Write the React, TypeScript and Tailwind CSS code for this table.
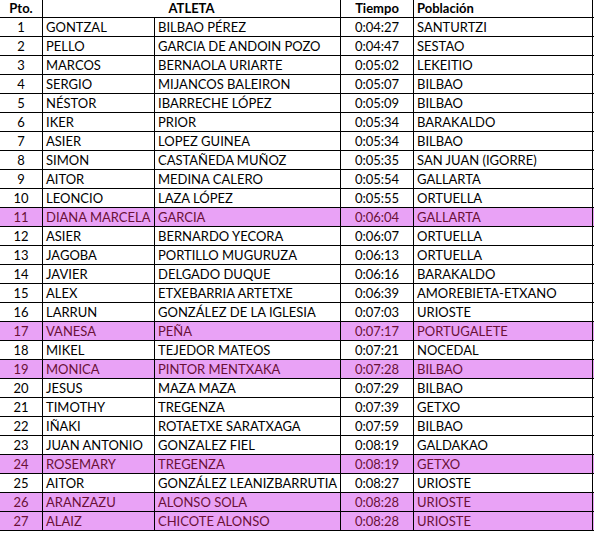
import React from "react";

type Row = [number, string, string, string, string, boolean];

const rows: Row[] = [
  [1, "GONTZAL", "BILBAO PÉREZ", "0:04:27", "SANTURTZI", false],
  [2, "PELLO", "GARCIA DE ANDOIN POZO", "0:04:47", "SESTAO", false],
  [3, "MARCOS", "BERNAOLA URIARTE", "0:05:02", "LEKEITIO", false],
  [4, "SERGIO", "MIJANCOS BALEIRON", "0:05:07", "BILBAO", false],
  [5, "NÉSTOR", "IBARRECHE LÓPEZ", "0:05:09", "BILBAO", false],
  [6, "IKER", "PRIOR", "0:05:34", "BARAKALDO", false],
  [7, "ASIER", "LOPEZ GUINEA", "0:05:34", "BILBAO", false],
  [8, "SIMON", "CASTAÑEDA MUÑOZ", "0:05:35", "SAN JUAN (IGORRE)", false],
  [9, "AITOR", "MEDINA CALERO", "0:05:54", "GALLARTA", false],
  [10, "LEONCIO", "LAZA LÓPEZ", "0:05:55", "ORTUELLA", false],
  [11, "DIANA MARCELA", "GARCIA", "0:06:04", "GALLARTA", true],
  [12, "ASIER", "BERNARDO YECORA", "0:06:07", "ORTUELLA", false],
  [13, "JAGOBA", "PORTILLO MUGURUZA", "0:06:13", "ORTUELLA", false],
  [14, "JAVIER", "DELGADO DUQUE", "0:06:16", "BARAKALDO", false],
  [15, "ALEX", "ETXEBARRIA ARTETXE", "0:06:39", "AMOREBIETA-ETXANO", false],
  [16, "LARRUN", "GONZÁLEZ DE LA IGLESIA", "0:07:03", "URIOSTE", false],
  [17, "VANESA", "PEÑA", "0:07:17", "PORTUGALETE", true],
  [18, "MIKEL", "TEJEDOR MATEOS", "0:07:21", "NOCEDAL", false],
  [19, "MONICA", "PINTOR MENTXAKA", "0:07:28", "BILBAO", true],
  [20, "JESUS", "MAZA MAZA", "0:07:29", "BILBAO", false],
  [21, "TIMOTHY", "TREGENZA", "0:07:39", "GETXO", false],
  [22, "IÑAKI", "ROTAETXE SARATXAGA", "0:07:59", "BILBAO", false],
  [23, "JUAN ANTONIO", "GONZALEZ FIEL", "0:08:19", "GALDAKAO", false],
  [24, "ROSEMARY", "TREGENZA", "0:08:19", "GETXO", true],
  [25, "AITOR", "GONZÁLEZ LEANIZBARRUTIA", "0:08:27", "URIOSTE", false],
  [26, "ARANZAZU", "ALONSO SOLA", "0:08:28", "URIOSTE", true],
  [27, "ALAIZ", "CHICOTE ALONSO", "0:08:28", "URIOSTE", true],
];

export default function App() {
  return (
    <div
      className="w-[594px] h-[533px] bg-white text-black text-[13px] leading-none"
      style={{ fontFamily: "Lato, 'Liberation Sans', sans-serif" }}
    >
      <div className="grid grid-cols-[43px_298px_73px_179px] h-[18px] border-b border-black font-bold">
        <div className="border-r border-black flex items-center justify-center">Pto.</div>
        <div className="border-r border-black flex items-center justify-center">ATLETA</div>
        <div className="border-r border-black flex items-center justify-center">Tiempo</div>
        <div className="border-r border-black flex items-center pl-[3px]">Población</div>
      </div>
      {rows.map(([n, name, last, time, town, hl]) => (
        <div
          key={n}
          className={
            hl
              ? "grid grid-cols-[43px_112px_186px_73px_179px] h-[19px] border-b border-black bg-[#e9a2f6] text-[#6a1036]"
              : "grid grid-cols-[43px_112px_186px_73px_179px] h-[19px] border-b border-black"
          }
        >
          <div className="border-r border-black flex items-center justify-center">{n}</div>
          <div className="border-r border-black flex items-center pl-[3px] whitespace-nowrap overflow-hidden">{name}</div>
          <div className="border-r border-black flex items-center pl-[3px] whitespace-nowrap overflow-hidden">{last}</div>
          <div className="border-r border-black flex items-center justify-center">{time}</div>
          <div className="border-r border-black flex items-center pl-[3px] whitespace-nowrap overflow-hidden">{town}</div>
        </div>
      ))}
    </div>
  );
}
